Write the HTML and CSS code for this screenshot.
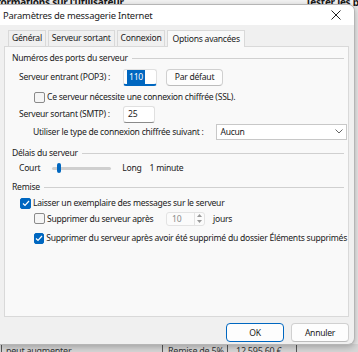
FILE: index.html
```
<!DOCTYPE html>
<html lang="fr">
<head>
    <meta charset="UTF-8">
    <title>Paramètres de messagerie Internet</title>
    <link rel="stylesheet" href="styles.css">
</head>
<body>
    <!-- fenetre de l'application derriere -->
    <div class="app-bg">
        <div class="app-top">
            <span class="app-title">formations sur l'utilisateur</span>
            <span class="app-test">Tester les paramètres</span>
        </div>
        <div class="app-bottom">
            <span class="app-note">peut augmenter</span>
            <span class="app-cell cell-a">Remise de 5%</span>
            <span class="app-cell cell-b">12 595,60 €</span>
        </div>
    </div>

    <div class="dialog">
        <div class="title-bar">
            <span class="title">Paramètres de messagerie Internet</span>
            <span class="close">
                <svg width="10" height="10" viewBox="0 0 10 10"><path d="M0.5 0.5 L9.5 9.5 M9.5 0.5 L0.5 9.5" stroke="#222" stroke-width="1"/></svg>
            </span>
        </div>

        <div class="dialog-body">
            <div class="tabs">
                <div class="tab">Général</div>
                <div class="tab">Serveur sortant</div>
                <div class="tab">Connexion</div>
                <div class="tab active">Options avancées</div>
            </div>

            <div class="panel">
                <div class="group-title first"><span>Numéros des ports du serveur</span></div>

                <div class="row row-pop">
                    <span class="lbl">Serveur entrant (POP3) :</span>
                    <span class="field focus"><span class="sel">110</span></span>
                    <span class="btn small">Par défaut</span>
                </div>
                <div class="row row-ssl">
                    <span class="check"></span>
                    <span>Ce serveur nécessite une connexion chiffrée (SSL).</span>
                </div>
                <div class="row row-smtp">
                    <span class="lbl">Serveur sortant (SMTP) :</span>
                    <span class="field narrow">25</span>
                </div>
                <div class="row row-type">
                    <span class="type-lbl">Utiliser le type de connexion chiffrée suivant :</span>
                    <span class="select">
                        <span>Aucun</span>
                        <svg width="8" height="5" viewBox="0 0 8 5"><path d="M0.5 0.5 L4 4 L7.5 0.5" fill="none" stroke="#666" stroke-width="1"/></svg>
                    </span>
                </div>

                <div class="group-title"><span>Délais du serveur</span></div>
                <div class="row row-slider">
                    <span>Court</span>
                    <span class="slider"><span class="thumb"></span></span>
                    <span class="long">Long</span>
                    <span>1 minute</span>
                </div>

                <div class="group-title"><span>Remise</span></div>
                <div class="row row-keep">
                    <span class="check on">
                        <svg width="8" height="7" viewBox="0 0 8 7"><path d="M1 3.5 L3 5.5 L7 1" fill="none" stroke="#fff" stroke-width="1.2"/></svg>
                    </span>
                    <span>Laisser un exemplaire des messages sur le serveur</span>
                </div>
                <div class="row row-del">
                    <span class="check"></span>
                    <span class="del-lbl">Supprimer du serveur après</span>
                    <span class="spin">
                        <span class="spin-val">10</span>
                        <span class="spin-btns">
                            <svg width="5" height="3" viewBox="0 0 5 3"><path d="M0 3 L2.5 0 L5 3 Z" fill="#999"/></svg>
                            <svg width="5" height="3" viewBox="0 0 5 3"><path d="M0 0 L2.5 3 L5 0 Z" fill="#999"/></svg>
                        </span>
                    </span>
                    <span>jours</span>
                </div>
                <div class="row row-del2">
                    <span class="check on">
                        <svg width="8" height="7" viewBox="0 0 8 7"><path d="M1 3.5 L3 5.5 L7 1" fill="none" stroke="#fff" stroke-width="1.2"/></svg>
                    </span>
                    <span>Supprimer du serveur après avoir été supprimé du dossier Éléments supprimés</span>
                </div>
            </div>

            <div class="footer">
                <span class="btn primary">OK</span>
                <span class="btn">Annuler</span>
            </div>
        </div>
    </div>
</body>
</html>
```

FILE: styles.css
```
/* reset */
* {
    margin: 0;
    padding: 0;
    box-sizing: border-box;
}

body {
    width: 358px;
    height: 352px;
    overflow: hidden;
    position: relative;
    background-color: #e6e6e6;
    font-family: "Noto Sans", "Open Sans", sans-serif;
    font-size: 8.6px;
    letter-spacing: -0.26px;
    color: #1a1a1a;
    white-space: nowrap;
}

/* application en arriere-plan */
.app-bg {
    height: 100%;
    display: flex;
    flex-direction: column;
    justify-content: space-between;
}

.app-top {
    height: 6px;
    overflow: hidden;
    display: flex;
    justify-content: space-between;
    font-weight: bold;
    font-size: 10px;
    line-height: 4px;
    background-color: #f2f2f2;
}

.app-title {
    margin-left: -3px;
}

.app-test {
    margin-right: -50px;
}

.app-bottom {
    height: 8px;
    overflow: hidden;
    display: flex;
    align-items: flex-start;
    background-color: #d6d6d6;
    font-size: 9px;
    line-height: 14px;
    color: #333;
}

.app-note {
    margin-left: 1px;
    width: 161px;
    border-left: 1px solid #555;
    padding-left: 4px;
}

.app-cell {
    border-left: 1px solid #555;
    padding-left: 5px;
}

.cell-a {
    width: 65px;
}

.cell-b {
    width: 70px;
    border-right: 1px solid #555;
    padding-left: 8px;
}

/* la boite de dialogue */
.dialog {
    position: absolute;
    left: 0;
    top: 4px;
    width: 355px;
    height: 341px;
    background-color: #f0f0f0;
    border: 1px solid #b5b5b5;
    border-left: none;
    border-radius: 0 7px 7px 0;
    box-shadow: 0 2px 6px rgba(0, 0, 0, 0.25);
    display: flex;
    flex-direction: column;
    overflow: hidden;
}

.title-bar {
    height: 20px;
    background-color: #ffffff;
    display: flex;
    align-items: center;
    justify-content: space-between;
    padding-left: 3px;
    padding-right: 13px;
    font-size: 9.4px;
    letter-spacing: -0.2px;
}

.close {
    display: flex;
}

.dialog-body {
    flex: 1;
    display: flex;
    flex-direction: column;
    padding: 4px 5px 0 4px;
}

/* onglets */
.tabs {
    display: flex;
    align-items: flex-end;
    gap: 2px;
    padding-left: 4px;
    height: 17px;
}

.tab {
    height: 16px;
    line-height: 15px;
    padding: 0 3px;
    border: 1px solid #d9d9d9;
    border-bottom: none;
    background-color: #f0f0f0;
}

.tab.active {
    height: 17px;
    line-height: 16px;
    padding: 0 4px;
    background-color: #f9f9f9;
    margin-bottom: -1px;
    position: relative;
    z-index: 1;
}

.panel {
    height: 271px;
    background-color: #f9f9f9;
    border: 1px solid #d9d9d9;
    padding: 0 1px 0 7px;
    display: flex;
    flex-direction: column;
}

.group-title {
    display: flex;
    align-items: center;
    height: 16px;
    gap: 4px;
    margin-top: 4px;
}

.group-title.first {
    margin-top: 3px;
}

.group-title::after {
    content: "";
    flex: 1;
    height: 1px;
    margin-right: 3px;
    background-color: #d0d0d0;
}

.row {
    display: flex;
    align-items: center;
}

.lbl {
    width: 104px;
}

.row-pop {
    height: 22px;
    padding-left: 7px;
}

.row-ssl {
    height: 18px;
    padding-left: 22px;
}

.row-smtp {
    height: 16px;
    padding-left: 7px;
}

.row-type {
    height: 19px;
    padding-left: 21px;
}

.type-lbl {
    width: 184px;
}

.row-slider {
    height: 14px;
    padding-left: 7px;
}

.row-keep {
    height: 16px;
    padding-left: 8px;
}

.row-del {
    height: 15px;
    padding-left: 22px;
}

.row-del2 {
    height: 16px;
    padding-left: 22px;
    margin-top: 4px;
}

/* champs */
.field {
    width: 34px;
    height: 17px;
    border: 1px solid #e0e0e0;
    border-bottom: 1px solid #8a8a8a;
    border-radius: 3px;
    background-color: #ffffff;
    padding-left: 3px;
    line-height: 15px;
}

.field.narrow {
    width: 32px;
    padding-left: 4px;
}

.field.focus {
    border-bottom: 2px solid #0067c0;
}

.sel {
    background-color: #0067c0;
    color: #ffffff;
    padding: 1px 2px;
}

.btn {
    display: flex;
    align-items: center;
    justify-content: center;
    width: 58px;
    height: 19px;
    border: 1px solid #d0d0d0;
    border-bottom-color: #bcbcbc;
    border-radius: 4px;
    background-color: #fdfdfd;
}

.btn.small {
    width: 57px;
    height: 17px;
    margin-left: 9px;
}

.btn.primary {
    border: 1px solid #0067c0;
}

.check {
    width: 11px;
    height: 11px;
    border: 1px solid #8a8a8a;
    border-radius: 2px;
    background-color: #f5f5f5;
    margin-right: 2px;
    display: flex;
    align-items: center;
    justify-content: center;
}

.check.on {
    background-color: #0067c0;
    border-color: #0067c0;
}

.select {
    width: 131px;
    height: 16px;
    border: 1px solid #c8c8c8;
    background-color: #ffffff;
    display: flex;
    align-items: center;
    justify-content: space-between;
    padding: 0 3px 0 3px;
}

.slider {
    width: 59px;
    height: 3px;
    background-color: #cfcfcf;
    border-radius: 2px;
    margin: 0 11px 0 12px;
    position: relative;
}

.thumb {
    position: absolute;
    left: 5px;
    top: -4px;
    width: 4px;
    height: 10px;
    border-radius: 2px;
    background-color: #0067c0;
}

.long {
    margin-right: 8px;
}

.del-lbl {
    width: 119px;
}

.spin {
    width: 39px;
    height: 14px;
    border: 1px solid #e3e3e3;
    border-radius: 3px;
    background-color: #fbfbfb;
    color: #8a8a8a;
    display: flex;
    align-items: center;
    justify-content: space-between;
    padding-left: 5px;
    margin-right: 8px;
}

.spin-btns {
    width: 10px;
    height: 12px;
    display: flex;
    flex-direction: column;
    align-items: center;
    justify-content: space-around;
    border-left: 1px solid #e3e3e3;
}

.footer {
    flex: 1;
    display: flex;
    justify-content: flex-end;
    align-items: center;
    gap: 7px;
    padding-top: 4px;
    padding-right: 0;
}
```
